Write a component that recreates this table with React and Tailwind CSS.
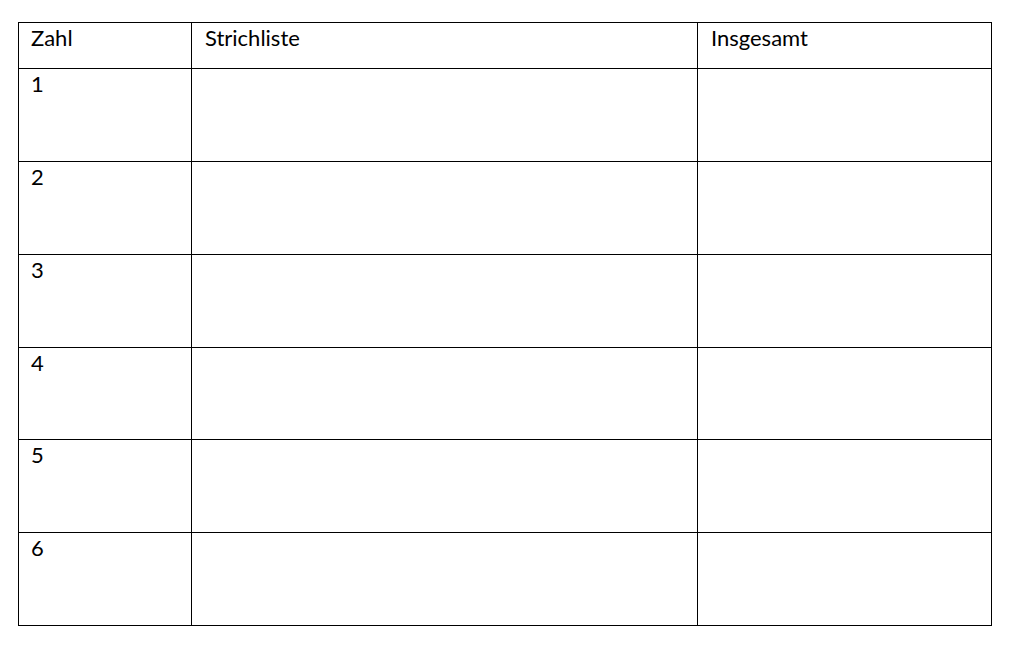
import React from "react";

// row 4 is one pixel shorter in the original
const rows = [
  { n: "1", h: "h-[93px]" },
  { n: "2", h: "h-[93px]" },
  { n: "3", h: "h-[93px]" },
  { n: "4", h: "h-[92px]" },
  { n: "5", h: "h-[93px]" },
  { n: "6", h: "h-[93px]" },
];

const App = () => {
  return (
    <div className="min-h-screen bg-white pt-[22px] pl-[18px] text-black" style={{ fontFamily: "Lato, 'Liberation Sans', sans-serif" }}>
      <div className="grid w-[974px] grid-cols-[173px_506px_294px] border-l border-t border-black text-[22px] leading-none">
        {/* header */}
        <div className="h-[46px] border-b border-r border-black pl-[12px] pt-[4px]">Zahl</div>
        <div className="h-[46px] border-b border-r border-black pl-[13px] pt-[4px]">Strichliste</div>
        <div className="h-[46px] border-b border-r border-black pl-[13px] pt-[4px]">Insgesamt</div>

        {rows.map((r) => (
          <React.Fragment key={r.n}>
            <div className={`${r.h} border-b border-r border-black pl-[12px] pt-[4px]`}>{r.n}</div>
            <div className={`${r.h} border-b border-r border-black`}></div>
            <div className={`${r.h} border-b border-r border-black`}></div>
          </React.Fragment>
        ))}
      </div>
    </div>
  );
};

export default App;
